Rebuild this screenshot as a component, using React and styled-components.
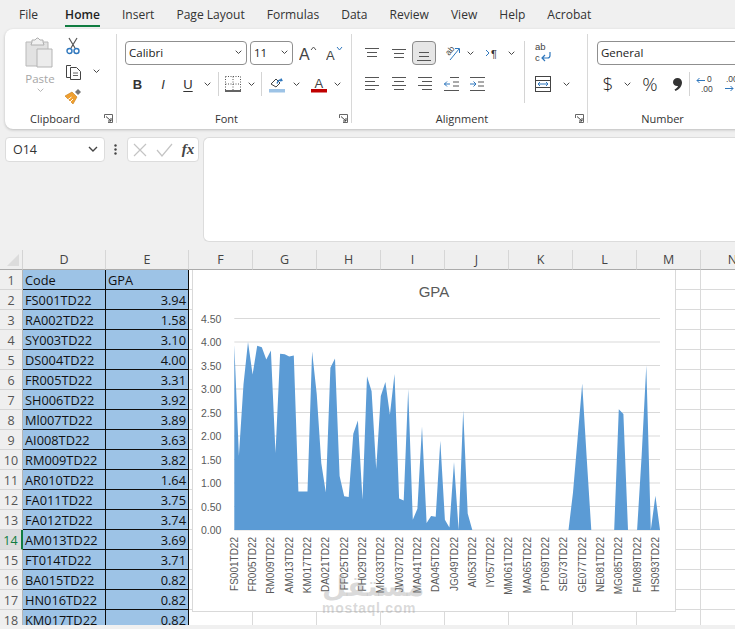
import React from "react";
import styled, { createGlobalStyle } from "styled-components";

const GlobalStyle = createGlobalStyle`
  html, body {
    margin: 0;
    padding: 0;
    width: 735px;
    height: 629px;
    overflow: hidden;
    background: #f0f0f0;
    font-family: "Open Sans", "Noto Sans", sans-serif;
  }
`;

const Page = styled.div`
  width: 735px;
  height: 629px;
  overflow: hidden;
  background: #f0f0f0;
  color: #333;
`;

const Tabs = styled.div`
  height: 29px;
  display: flex;
  gap: 22px;
  padding-left: 19px;
`;

const Tab = styled.div`
  height: 25px;
  line-height: 29px;
  font-size: 12.05px;
  color: ${(p) => (p.$active ? "#1f1f1f" : "#333")};
  font-weight: ${(p) => (p.$active ? 600 : 400)};
  margin-right: ${(p) => (p.$first ? "5px" : "0")};
  border-bottom: 2px solid ${(p) => (p.$active ? "#107c41" : "transparent")};
`;

const Ribbon = styled.div`
  width: 745px;
  height: 100px;
  margin-left: 5px;
  box-sizing: border-box;
  padding: 5px 0 6px;
  display: flex;
  background: #fff;
  border-radius: 8px;
  box-shadow: 0 1px 3px rgba(0, 0, 0, 0.22);
`;

const Group = styled.div`
  flex: none;
  width: ${(p) => p.$w}px;
  box-sizing: border-box;
  display: grid;
  grid-template-rows: 1fr 12px;
  border-right: ${(p) => (p.$last ? "none" : "1px solid #d8d8d8")};
`;

const GroupBody = styled.div`
  display: flex;
  padding: 7px 0 0 ${(p) => p.$pl}px;
`;

const GroupFoot = styled.div`
  display: grid;
  grid-template-columns: 1fr 12px;
  padding: 0 3px 0 ${(p) => p.$pl || 0}px;
  font-size: 11px;
  line-height: 16px;
  text-align: center;
  color: #333;
`;

const Launcher = styled.svg`
  width: 9px;
  height: 9px;
  margin-top: 3px;
  justify-self: end;
`;

const Rows = styled.div`
  display: flex;
  flex-direction: column;
  gap: 7px;
`;

const Row = styled.div`
  display: flex;
  height: 24px;
  align-items: center;
`;

const Tool = styled.div`
  flex: none;
  width: ${(p) => p.$w}px;
  height: 24px;
  box-sizing: border-box;
  margin-left: ${(p) => p.$ml || 0}px;
  display: flex;
  align-items: center;
  justify-content: center;
  overflow: visible;
  color: #333;
  background: ${(p) => (p.$on ? "#e6e6e6" : "transparent")};
  border: ${(p) => (p.$on ? "1px solid #8a8a8a" : "none")};
  border-radius: 4px;
  svg {
    flex: none;
  }
`;

const Sep = styled.div`
  flex: none;
  width: 1px;
  height: ${(p) => p.$h || 24}px;
  margin: 0 ${(p) => p.$mr || 0}px 0 ${(p) => p.$ml || 0}px;
  background: #d4d4d4;
`;

const PasteColumn = styled.div`
  flex: none;
  width: 40px;
  margin-top: -4px;
  display: flex;
  flex-direction: column;
  align-items: center;
  color: #a6a6a6;
  font-size: 11.5px;
  line-height: 16px;
  svg {
    flex: none;
  }
`;

const PasteLabel = styled.div`
  margin: 2px 0 1px;
`;

const ClipTools = styled.div`
  margin: -7px 0 0 1px;
  display: flex;
  flex-direction: column;
  gap: 1px;
`;

const Select = styled.div`
  flex: none;
  width: ${(p) => p.$w}px;
  height: 24px;
  box-sizing: border-box;
  margin-left: ${(p) => p.$ml || 0}px;
  padding: 0 4px 2px 3px;
  display: flex;
  align-items: center;
  justify-content: space-between;
  border: 1px solid #8f8f8f;
  border-radius: 4px;
  font-size: 11.5px;
  color: #222;
`;

const StyleGlyph = styled.span`
  font: ${(p) => p.$style || "normal"} ${(p) => p.$weight || 700} ${(p) => p.$size || 13}px "Liberation Sans", sans-serif;
  text-decoration: ${(p) => (p.$under ? "underline" : "none")};
  text-underline-offset: 2px;
  color: #333;
`;

const NumGlyph = styled.span`
  font-family: "Open Sans", sans-serif;
  font-size: ${(p) => p.$size}px;
  font-weight: 300;
  color: #222;
`;

const FormulaRow = styled.div`
  height: 105px;
  margin-top: 8px;
  display: flex;
  align-items: flex-start;
`;

const NameBox = styled.div`
  width: 101px;
  height: 25px;
  margin-left: 5px;
  box-sizing: border-box;
  padding: 0 6px 0 7px;
  display: flex;
  align-items: center;
  justify-content: space-between;
  background: #fff;
  border: 1px solid #dcdcdc;
  border-radius: 4px;
  font-size: 12.5px;
  color: #333;
`;

const Dots = styled.div`
  width: 23px;
  height: 25px;
  display: flex;
  align-items: center;
  justify-content: center;
`;

const FxBox = styled.div`
  width: 73px;
  height: 25px;
  box-sizing: border-box;
  padding: 0 4px 0 5px;
  display: flex;
  align-items: center;
  justify-content: space-between;
  background: #fff;
  border: 1px solid #dcdcdc;
  border-radius: 4px;
`;

const FxText = styled.span`
  font: italic 700 15px "Liberation Serif", serif;
  color: #444;
`;

const FormulaInput = styled.div`
  width: 540px;
  height: 105px;
  margin-left: 4px;
  box-sizing: border-box;
  background: #fff;
  border: 1px solid #dcdcdc;
  border-right: none;
  border-radius: 6px 0 0 6px;
`;

const Sheet = styled.div`
  position: relative;
  height: 375px;
  margin-top: 8px;
  overflow: hidden;
  background: #fff;
`;

const GridRow = styled.div`
  display: grid;
  grid-template-columns: 23px 83px 83px repeat(9, 64px);
  grid-template-rows: 20px;
  height: 20px;
`;

const Corner = styled.div`
  position: relative;
  background: #efefef;
  border-bottom: 1px solid #ababab;
  border-right: 1px solid #d4d4d4;
  &::after {
    content: "";
    position: absolute;
    right: 3px;
    bottom: 3px;
    border-style: solid;
    border-width: 0 0 12px 12px;
    border-color: transparent transparent #dcdcdc transparent;
  }
`;

const ColHead = styled.div`
  box-sizing: border-box;
  text-align: center;
  line-height: 20px;
  font-size: 12.5px;
  color: #444;
  background: #efefef;
  border-bottom: 1px solid #ababab;
  border-right: 1px solid #d6d6d6;
`;

const RowHead = styled.div`
  box-sizing: border-box;
  text-align: center;
  line-height: 21px;
  font-size: 12.5px;
  color: ${(p) => (p.$on ? "#107c41" : "#555")};
  background: ${(p) => (p.$on ? "#dcdcdc" : "#efefef")};
  border-bottom: 1px solid #d6d6d6;
  border-right: ${(p) => (p.$on ? "2px solid #107c41" : "1px solid #b5b5b5")};
`;

const DataCell = styled.div`
  box-sizing: border-box;
  padding: 0 2px 0 2px;
  line-height: 21px;
  font-size: 12.8px;
  white-space: nowrap;
  overflow: hidden;
  color: #111;
  text-align: ${(p) => (p.$num ? "right" : "left")};
  background: #9dc3e6;
  border-bottom: 1px solid #0c0c0c;
  border-right: 1px solid #0c0c0c;
`;

const EmptyCell = styled.div`
  box-sizing: border-box;
  border-bottom: 1px solid #dadada;
  border-right: 1px solid #dadada;
`;

const ChartPanel = styled.div`
  position: absolute;
  left: 192px;
  top: 20px;
  width: 484px;
  height: 342px;
  box-sizing: border-box;
  background: #fff;
  border: 1px solid #d9d9d9;
  border-top: none;
`;

const ChartSvg = styled.svg`
  display: block;
  width: 482px;
  height: 341px;
`;

const Watermark = styled.div`
  position: absolute;
  left: 322px;
  top: 323px;
  width: 90px;
  text-align: center;
  color: rgba(150, 150, 150, 0.36);
  pointer-events: none;
`;

const WatermarkLogo = styled.div`
  font: 700 28px/28px "DejaVu Sans", sans-serif;
`;

const WatermarkUrl = styled.div`
  font: 700 14px/14px "Liberation Sans", sans-serif;
  letter-spacing: 0.7px;
`;

const Footer = styled.div`
  height: 4px;
  background: #f0f0f0;
`;

const Chevron = ({ size = 7, color = "#444" }) => (
  <svg width={size} height={size * 0.65} viewBox="0 0 10 6.5" overflow="visible">
    <path d="M1 1l4 4 4-4" fill="none" stroke={color} strokeWidth="1.4" />
  </svg>
);

const LauncherIcon = () => (
  <Launcher viewBox="0 0 9 9">
    <path d="M.5 4V.5H8.5V8.5H4" fill="none" stroke="#666" />
    <path d="M2 2.5L7 7M7 4v3H4" fill="none" stroke="#444" />
  </Launcher>
);

const Lines = ({ rows, w = 16, h = 18 }) => (
  <svg width={w} height={h} viewBox={`0 0 ${w} ${h}`}>
    {rows.map(([x1, x2, y], i) => (
      <path key={i} d={`M${x1} ${y + 0.5}H${x2}`} stroke="#555" />
    ))}
  </svg>
);

const PasteIcon = () => (
  <svg width="32" height="32" viewBox="0 0 32 32">
    <path d="M2 5h22v24H2z" fill="#e2e2e2" stroke="#b9b9b9" />
    <path d="M8 5V3h3l2-2h1l2 2h3v2l1 3H7z" fill="#f1f1f1" stroke="#b0b0b0" />
    <path d="M13 12h15v18H13z" fill="#ececec" stroke="#b4b4b4" />
  </svg>
);

const ScissorsIcon = () => (
  <svg width="14" height="18" viewBox="0 0 14 18">
    <path d="M3 1l6 10M11 1L5 11" fill="none" stroke="#555" strokeWidth="1.2" />
    <circle cx="3.5" cy="14" r="2.5" fill="none" stroke="#2f77bd" strokeWidth="1.4" />
    <circle cx="10.5" cy="14" r="2.5" fill="none" stroke="#2f77bd" strokeWidth="1.4" />
  </svg>
);

const CopyIcon = () => (
  <svg width="17" height="17" viewBox="0 0 17 17">
    <path d="M6 2.5H1.500v12H5" fill="none" stroke="#444" />
    <path d="M5.500 4.500h6l4 4v8h-10z" fill="#fff" stroke="#444" />
    <path d="M8 10h5M8 12.500h5" stroke="#666" />
  </svg>
);

const BrushIcon = () => (
  <svg width="18" height="17" viewBox="0 0 18 17">
    <path d="M11 4l3-3 3 3-3 3z" fill="#777" />
    <path d="M1 8l7-4 5 5-4 7z" fill="#f0a030" stroke="#c47a18" strokeWidth=".6" />
    <path d="M3.500 12l4-3M6 14l3-3" stroke="#fff" />
  </svg>
);

const BigA = ({ up }) => (
  <svg width="19" height="18" viewBox="0 0 19 18">
    <text x="0" y="15.500" fontFamily="Liberation Sans, sans-serif" fontSize={up ? 16 : 13} fill="#444">
      A
    </text>
    <path d={up ? "M12 6l2.500-3L17 6" : "M11 3l2.500 3L16 3"} fill="none" stroke={up ? "#555" : "#2f77bd"} />
  </svg>
);

const BordersIcon = () => (
  <svg width="16" height="16" viewBox="0 0 16 16">
    <path
      d="M.5 .5h15M.5 8h15M8 .5v14M.5 .5v14M15.500 .5v14"
      stroke="#555"
      strokeDasharray="1 1.500"
      fill="none"
    />
    <path d="M0 15h16" stroke="#222" strokeWidth="1.400" />
  </svg>
);

const FillIcon = () => (
  <svg width="17" height="17" viewBox="0 0 17 17">
    <path d="M2 8l5-5 4 4-4 4z" fill="#fff" stroke="#444" />
    <path d="M8 7.500c1-3 3-4 4.500-3.500M12 2.500l1 2-2 .5" fill="none" stroke="#2f77bd" strokeWidth="1.200" />
    <rect y="13" width="16" height="3.500" fill="#9dc3e6" />
  </svg>
);

const FontColorIcon = () => (
  <svg width="17" height="17" viewBox="0 0 17 17">
    <text x="3.500" y="11.500" fontFamily="Liberation Sans, sans-serif" fontSize="13" fill="#444">
      A
    </text>
    <rect y="13" width="16" height="3.500" fill="#c00000" />
  </svg>
);

const OrientIcon = () => (
  <svg width="18" height="18" viewBox="0 0 18 18">
    <text transform="translate(5 12) rotate(-50)" fontFamily="Liberation Sans, sans-serif" fontSize="8.500" fill="#444">
      ab
    </text>
    <path d="M6 16L15 5M11 4.500h4.500V9" fill="none" stroke="#2f77bd" />
  </svg>
);

const RtlIcon = () => (
  <svg width="16" height="14" viewBox="0 0 16 14">
    <path d="M1 4l3 3-3 3" fill="none" stroke="#2f77bd" />
    <text x="6" y="11.500" fontFamily="Liberation Sans, sans-serif" fontSize="11" fill="#333">
      ¶
    </text>
  </svg>
);

const WrapIcon = () => (
  <svg width="18" height="22" viewBox="0 0 18 22">
    <text x="1" y="8" fontFamily="Liberation Sans, sans-serif" fontSize="9.500" fill="#444">
      ab
    </text>
    <text x="1" y="19" fontFamily="Liberation Sans, sans-serif" fontSize="9.500" fill="#444">
      c
    </text>
    <path d="M16 10v3.500c0 1.500-1 2.500-2.500 2.500H8M11 13l-3 3 3 3" fill="none" stroke="#2f77bd" strokeWidth="1.200" />
  </svg>
);

const MergeIcon = () => (
  <svg width="16" height="16" viewBox="0 0 16 16">
    <rect x=".5" y=".5" width="15" height="15" fill="#fff" stroke="#444" />
    <path d="M.5 4.500h15M.5 11.500h15" stroke="#444" />
    <path d="M3 8h10M5 6L3 8l2 2M11 6l2 2-2 2" fill="none" stroke="#2f77bd" />
  </svg>
);

const IndentIcon = ({ out }) => (
  <svg width="15" height="14" viewBox="0 0 15 14">
    <path d={out ? "M6 .5h9M9 5h6M9 9h6M0 13.500h15" : "M0 .5h15M8 5h6M8 9h6M0 13.500h15"} stroke="#555" />
    <path d={out ? "M0 7h6M3 4.500L.5 7 3 9.500" : "M0 7h6M3.500 4.500L6 7 3.500 9.500"} fill="none" stroke="#2f77bd" />
  </svg>
);

const CommaIcon = () => (
  <svg width="9" height="13" viewBox="0 0 9 13">
    <path d="M4.500 0C7 0 9 1.800 9 4.500 9 8 6.500 11.500 2.500 13L1.500 11.500C3.500 10.500 4.700 9.200 5 8 2.500 8.500 0 6.800 0 4.200 0 1.800 2 0 4.500 0z" fill="#333" />
  </svg>
);

const DecimalIcon = ({ more }) => (
  <svg width="22" height="20" viewBox="0 0 22 20">
    <text x={more ? 11 : 2} y="8" fontFamily="Liberation Sans, sans-serif" fontSize="8.500" fill="#444">
      {more ? "0" : ".00"}
    </text>
    <text x={more ? 5 : 11} y="18" fontFamily="Liberation Sans, sans-serif" fontSize="8.500" fill="#444">
      {more ? ".00" : ".0"}
    </text>
    <path d={more ? "M1 6.500h8M3.500 4L1 6.500 3.500 9" : "M1 14.500h8M6.500 12L9 14.500 6.500 17"} fill="none" stroke="#2f77bd" />
  </svg>
);

const TABS = ["File", "Home", "Insert", "Page Layout", "Formulas", "Data", "Review", "View", "Help", "Acrobat"];

const TABLE = [
  ["Code", "GPA"],
  ["FS001TD22", "3.94"],
  ["RA002TD22", "1.58"],
  ["SY003TD22", "3.10"],
  ["DS004TD22", "4.00"],
  ["FR005TD22", "3.31"],
  ["SH006TD22", "3.92"],
  ["Ml007TD22", "3.89"],
  ["AI008TD22", "3.63"],
  ["RM009TD22", "3.82"],
  ["AR010TD22", "1.64"],
  ["FA011TD22", "3.75"],
  ["FA012TD22", "3.74"],
  ["AM013TD22", "3.69"],
  ["FT014TD22", "3.71"],
  ["BA015TD22", "0.82"],
  ["HN016TD22", "0.82"],
  ["KM017TD22", "0.82"],
];

const COLS = ["D", "E", "F", "G", "H", "I", "J", "K", "L", "M", "N"];
const EMPTY_COLS = COLS.slice(2);

const GPA = [
  3.94, 1.58, 3.1, 4.0, 3.31, 3.92, 3.89, 3.63, 3.82, 1.64, 3.75, 3.74, 3.69, 3.71, 0.82, 0.82, 0.82, 3.8, 2.9, 1.42,
  0.8, 3.45, 3.65, 1.15, 0.72, 0.7, 2.05, 2.33, 0.65, 3.27, 2.95, 1.3, 2.85, 3.15, 2.45, 3.32, 0.67, 0.63, 3.0, 0.22,
  0.45, 2.2, 0.15, 0.3, 0.28, 1.9, 0.22, 0.05, 1.45, 0, 2.55, 0.35, 0, 0, 0, 0, 0, 0, 0, 0, 0, 0, 0, 0, 0, 0, 0, 0, 0,
  0, 0, 0, 0, 0, 0.8, 1.95, 3.12, 1.5, 0, 0, 0, 0, 0, 0, 2.57, 2.47, 0, 0, 0, 1.6, 3.5, 0, 0.73, 0,
];

const AXIS_LABELS = [
  "FS001TD22", "FR005TD22", "RM009TD22", "AM013TD22", "KM017TD22", "DA021TD22", "FF025TD22", "FH029TD22",
  "MK033TD22", "JW037TD22", "MA041TD22", "DA045TD22", "JG049TD22", "AI053TD22", "IY057TD22", "MM061TD22",
  "MA065TD22", "PT069TD22", "SE073TD22", "GE077TD22", "NE081TD22", "MG085TD22", "FM089TD22", "HS093TD22",
];

const PLOT = { left: 41.3, right: 467, bottom: 260, unit: 47 };
const STEP = (PLOT.right - PLOT.left) / (GPA.length - 1);
const TICKS = [0, 0.5, 1, 1.5, 2, 2.5, 3, 3.5, 4, 4.5];

const AreaChart = () => {
  const points = GPA.map((v, i) => `${(PLOT.left + i * STEP).toFixed(1)},${(PLOT.bottom - v * PLOT.unit).toFixed(1)}`);
  const area = `${PLOT.left},${PLOT.bottom} ${points.join(" ")} ${PLOT.right},${PLOT.bottom}`;
  return (
    <ChartSvg viewBox="0 0 482 341">
      <text x="241" y="27" textAnchor="middle" fontFamily="Liberation Sans, sans-serif" fontSize="15" fill="#595959">
        GPA
      </text>
      {TICKS.map((t) => (
        <g key={t}>
          <path d={`M${PLOT.left} ${PLOT.bottom - t * PLOT.unit}H${PLOT.right}`} stroke="#d9d9d9" />
          <text
            x="8"
            y={PLOT.bottom - t * PLOT.unit + 4}
            fontFamily="Liberation Sans, sans-serif"
            fontSize="10.500"
            fill="#595959"
          >
            {t.toFixed(2)}
          </text>
        </g>
      ))}
      <polygon points={area} fill="#5b9bd5" />
      {AXIS_LABELS.map((label, i) => (
        <text
          key={label}
          transform={`translate(${PLOT.left + i * 4 * STEP + 3.5} 267) rotate(-90)`}
          textAnchor="end"
          fontFamily="Liberation Sans, sans-serif"
          fontSize="10"
          fill="#595959"
        >
          {label}
        </text>
      ))}
    </ChartSvg>
  );
};

const App = () => (
  <Page>
    <GlobalStyle />
    <Tabs>
      {TABS.map((t) => (
        <Tab key={t} $active={t === "Home"} $first={t === "File"}>
          {t}
        </Tab>
      ))}
    </Tabs>

    <Ribbon>
      <Group $w={112}>
        <GroupBody $pl={15}>
          <PasteColumn>
            <PasteIcon />
            <PasteLabel>Paste</PasteLabel>
            <Chevron color="#b5b5b5" />
          </PasteColumn>
          <ClipTools>
            <Row>
              <Tool $w={24}>
                <ScissorsIcon />
              </Tool>
            </Row>
            <Row>
              <Tool $w={24}>
                <CopyIcon />
              </Tool>
              <Tool $w={22}>
                <Chevron />
              </Tool>
            </Row>
            <Row>
              <Tool $w={24}>
                <BrushIcon />
              </Tool>
            </Row>
          </ClipTools>
        </GroupBody>
        <GroupFoot $pl={4}>
          <span>Clipboard</span>
          <LauncherIcon />
        </GroupFoot>
      </Group>

      <Group $w={235}>
        <GroupBody $pl={8}>
          <Rows>
            <Row>
              <Select $w={122}>
                Calibri
                <Chevron />
              </Select>
              <Select $w={43} $ml={3}>
                11
                <Chevron />
              </Select>
              <Tool $w={24} $ml={3}>
                <BigA up />
              </Tool>
              <Tool $w={24} $ml={3}>
                <BigA />
              </Tool>
            </Row>
            <Row>
              <Tool $w={25}>
                <StyleGlyph>B</StyleGlyph>
              </Tool>
              <Tool $w={26}>
                <StyleGlyph $weight={400} $style="italic">
                  I
                </StyleGlyph>
              </Tool>
              <Tool $w={24}>
                <StyleGlyph $weight={400} $under>
                  U
                </StyleGlyph>
              </Tool>
              <Tool $w={14}>
                <Chevron />
              </Tool>
              <Sep $ml={4} $mr={4} />
              <Tool $w={19}>
                <BordersIcon />
              </Tool>
              <Tool $w={18}>
                <Chevron />
              </Tool>
              <Sep $ml={1} $mr={2} />
              <Tool $w={24} $ml={1}>
                <FillIcon />
              </Tool>
              <Tool $w={15}>
                <Chevron />
              </Tool>
              <Tool $w={30}>
                <FontColorIcon />
              </Tool>
              <Tool $w={6}>
                <Chevron />
              </Tool>
            </Row>
          </Rows>
        </GroupBody>
        <GroupFoot>
          <span>Font</span>
          <LauncherIcon />
        </GroupFoot>
      </Group>

      <Group $w={236}>
        <GroupBody $pl={7}>
          <Rows>
            <Row>
              <Tool $w={26}>
                <Lines rows={[[1, 15, 4], [3, 13, 8], [3, 13, 12]]} />
              </Tool>
              <Tool $w={27}>
                <Lines rows={[[1, 15, 5], [3, 13, 9], [3, 13, 13]]} />
              </Tool>
              <Tool $w={24} $on>
                <Lines rows={[[3, 13, 8], [3, 13, 12], [1, 15, 16]]} />
              </Tool>
              <Tool $w={28} $ml={3}>
                <OrientIcon />
              </Tool>
              <Tool $w={6}>
                <Chevron />
              </Tool>
              <Tool $w={26} $ml={7}>
                <RtlIcon />
              </Tool>
              <Tool $w={10}>
                <Chevron />
              </Tool>
            </Row>
            <Row>
              <Tool $w={26}>
                <Lines rows={[[1, 15, 2], [1, 11, 6], [1, 15, 10], [1, 11, 14]]} />
              </Tool>
              <Tool $w={27}>
                <Lines rows={[[1, 15, 2], [3, 13, 6], [1, 15, 10], [3, 13, 14]]} />
              </Tool>
              <Tool $w={26}>
                <Lines rows={[[1, 15, 2], [5, 15, 6], [1, 15, 10], [5, 15, 14]]} />
              </Tool>
              <Tool $w={26}>
                <IndentIcon out />
              </Tool>
              <Tool $w={26}>
                <IndentIcon />
              </Tool>
            </Row>
          </Rows>
          <Sep $h={62} $ml={8} />
          <Rows>
            <Row>
              <Tool $w={36}>
                <WrapIcon />
              </Tool>
            </Row>
            <Row>
              <Tool $w={36}>
                <MergeIcon />
              </Tool>
              <Tool $w={10}>
                <Chevron />
              </Tool>
            </Row>
          </Rows>
        </GroupBody>
        <GroupFoot>
          <span>Alignment</span>
          <LauncherIcon />
        </GroupFoot>
      </Group>

      <Group $w={164} $last>
        <GroupBody $pl={9}>
          <Rows>
            <Row>
              <Select $w={155}>General</Select>
            </Row>
            <Row>
              <Tool $w={22}>
                <NumGlyph $size={19}>$</NumGlyph>
              </Tool>
              <Tool $w={16}>
                <Chevron />
              </Tool>
              <Tool $w={30}>
                <NumGlyph $size={19}>%</NumGlyph>
              </Tool>
              <Tool $w={24}>
                <CommaIcon />
              </Tool>
              <Sep />
              <Tool $w={28} $ml={3}>
                <DecimalIcon more />
              </Tool>
              <Tool $w={28}>
                <DecimalIcon />
              </Tool>
            </Row>
          </Rows>
        </GroupBody>
        <GroupFoot>
          <span>Number</span>
          <span />
        </GroupFoot>
      </Group>
    </Ribbon>

    <FormulaRow>
      <NameBox>
        O14
        <Chevron size={10} />
      </NameBox>
      <Dots>
        <svg width="3" height="11" viewBox="0 0 3 11">
          <circle cx="1.500" cy="1.500" r="1.200" fill="#444" />
          <circle cx="1.500" cy="5.500" r="1.200" fill="#444" />
          <circle cx="1.500" cy="9.500" r="1.200" fill="#444" />
        </svg>
      </Dots>
      <FxBox>
        <svg width="14" height="14" viewBox="0 0 14 14">
          <path d="M1 1l12 12M13 1L1 13" stroke="#c4c4c4" strokeWidth="1.200" />
        </svg>
        <svg width="17" height="14" viewBox="0 0 17 14">
          <path d="M1 7l5 6L16 1" fill="none" stroke="#c4c4c4" strokeWidth="1.200" />
        </svg>
        <FxText>fx</FxText>
      </FxBox>
      <FormulaInput />
    </FormulaRow>

    <Sheet>
      <GridRow>
        <Corner />
        {COLS.map((c) => (
          <ColHead key={c}>{c}</ColHead>
        ))}
      </GridRow>
      {TABLE.map(([code, gpa], i) => (
        <GridRow key={code}>
          <RowHead $on={i === 13}>{i + 1}</RowHead>
          <DataCell>{code}</DataCell>
          <DataCell $num={i > 0}>{gpa}</DataCell>
          {EMPTY_COLS.map((c) => (
            <EmptyCell key={c} />
          ))}
        </GridRow>
      ))}
      <ChartPanel>
        <AreaChart />
      </ChartPanel>
      <Watermark>
        <WatermarkLogo>مستقل</WatermarkLogo>
        <WatermarkUrl>mostaql.com</WatermarkUrl>
      </Watermark>
    </Sheet>
    <Footer />
  </Page>
);

export default App;
